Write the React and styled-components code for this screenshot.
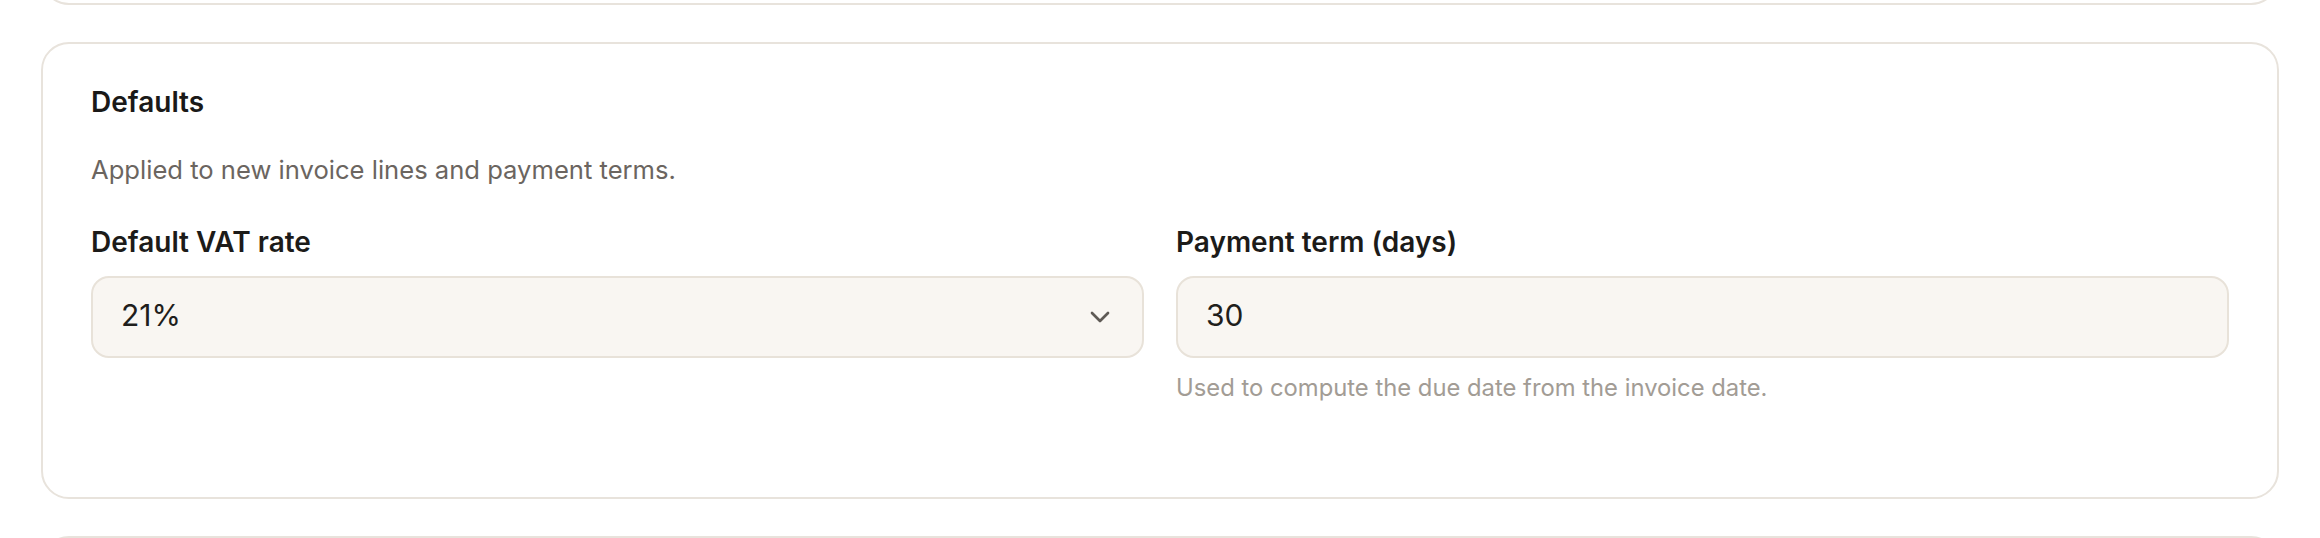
import styled, { createGlobalStyle } from "styled-components";
import { ChevronDown } from "lucide-react";

const GlobalStyle = createGlobalStyle`
    html, body {
        margin: 0;
        padding: 0;
        background: #ffffff;
    }

    body {
        font-family: Inter, "Noto Sans", sans-serif;
        color: #1c1b19;
        overflow: hidden;
    }
`;

const App = () => {
    return (
        <>
            <GlobalStyle/>
            <PageS>
                <CardS $stub={"prev"}/>
                <CardS>
                    <TitleS>Defaults</TitleS>
                    <DescS>Applied to new invoice lines and payment terms.</DescS>
                    <GridS>
                        <FieldS>
                            <LabelS>Default VAT rate</LabelS>
                            <SelectS>
                                <span>21%</span>
                                <ChevronDown size={32} strokeWidth={2} color={"#5f5a55"}/>
                            </SelectS>
                        </FieldS>
                        <FieldS>
                            <LabelS htmlFor={"payment-term"}>Payment term (days)</LabelS>
                            <InputS id={"payment-term"} defaultValue={"30"}/>
                            <HintS>Used to compute the due date from the invoice date.</HintS>
                        </FieldS>
                    </GridS>
                </CardS>
                <CardS $stub={"next"}/>
            </PageS>
        </>
    );
};

const PageS = styled.div`
    display: flex;
    flex-direction: column;
    gap: 37px;
    height: 538px;
    overflow: hidden;
    padding: 0 41px;
`;

const CardS = styled.section`
    box-sizing: border-box;
    flex-shrink: 0;
    background: #ffffff;
    border: 2px solid #e8e3dc;
    border-radius: 28px;
    padding: 40px 48px 93px;

    ${({ $stub }) => $stub === "prev" && `
        height: 80px;
        margin-top: -75px;
        padding: 0;
    `}

    ${({ $stub }) => $stub === "next" && `
        height: 80px;
        padding: 0;
    `}
`;

const TitleS = styled.h2`
    margin: 0;
    font-size: 28px;
    line-height: 36px;
    font-weight: 600;
    color: #1a1918;
`;

const DescS = styled.p`
    margin: 32px 0 0;
    font-size: 25.6px;
    line-height: 36px;
    color: #6b6560;
`;

const GridS = styled.div`
    display: grid;
    grid-template-columns: 1fr 1fr;
    gap: 32px;
    margin-top: 36px;
`;

const FieldS = styled.div`
    display: flex;
    flex-direction: column;
`;

const LabelS = styled.label`
    display: block;
    margin-bottom: 16px;
    font-size: 28px;
    line-height: 36px;
    font-weight: 600;
    color: #1c1b19;
`;

const fieldBox = `
    box-sizing: border-box;
    width: 100%;
    height: 82px;
    border: 2px solid #e8e2d9;
    border-radius: 18px;
    background: #f9f6f2;
    font-family: Inter, "Noto Sans", sans-serif;
    font-size: 30px;
    color: #1f1e1c;
`;

const SelectS = styled.div`
    ${fieldBox}
    display: flex;
    align-items: center;
    justify-content: space-between;
    padding: 0 26px 5px 28px;

    svg {
        margin-top: 5px;
        flex-shrink: 0;
    }
`;

const InputS = styled.input`
    ${fieldBox}
    display: block;
    padding: 0 28px 5px;
    outline: none;
`;

const HintS = styled.p`
    margin: 14px 0 0;
    font-size: 23.8px;
    line-height: 32px;
    color: #a29c95;
`;

export default App;
